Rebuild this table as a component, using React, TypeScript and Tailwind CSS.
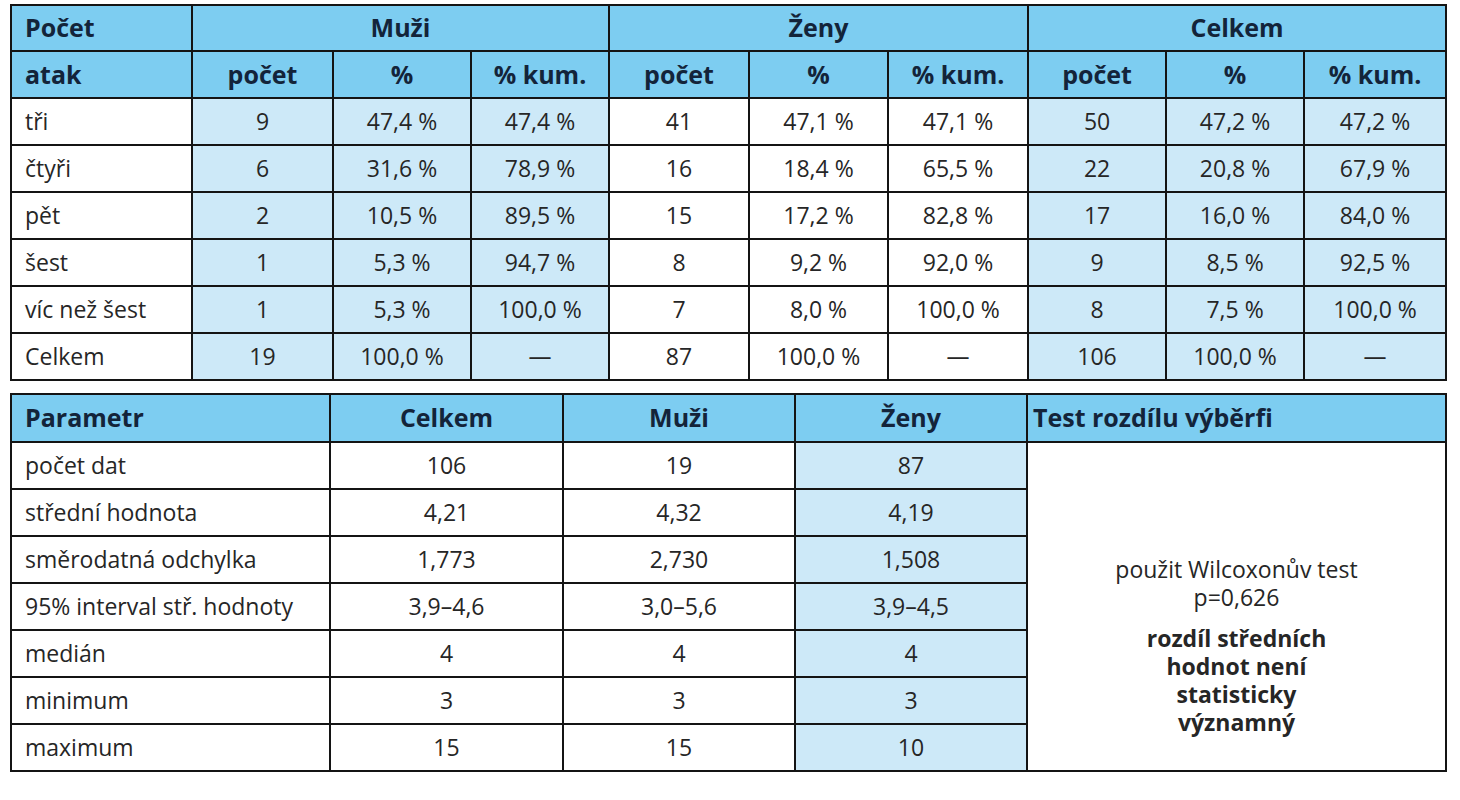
import React from "react";

const head = "bg-[#7dcdf1] text-[#13243a] font-bold text-[25px]";
const light = "bg-[#cde9f8]";
const cell = "border-2 border-[#141414] p-0";

type Row = { label: string; m: string[]; z: string[]; c: string[] };

const rows: Row[] = [
  { label: "tři", m: ["9", "47,4 %", "47,4 %"], z: ["41", "47,1 %", "47,1 %"], c: ["50", "47,2 %", "47,2 %"] },
  { label: "čtyři", m: ["6", "31,6 %", "78,9 %"], z: ["16", "18,4 %", "65,5 %"], c: ["22", "20,8 %", "67,9 %"] },
  { label: "pět", m: ["2", "10,5 %", "89,5 %"], z: ["15", "17,2 %", "82,8 %"], c: ["17", "16,0 %", "84,0 %"] },
  { label: "šest", m: ["1", "5,3 %", "94,7 %"], z: ["8", "9,2 %", "92,0 %"], c: ["9", "8,5 %", "92,5 %"] },
  { label: "víc než šest", m: ["1", "5,3 %", "100,0 %"], z: ["7", "8,0 %", "100,0 %"], c: ["8", "7,5 %", "100,0 %"] },
  { label: "Celkem", m: ["19", "100,0 %", "—"], z: ["87", "100,0 %", "—"], c: ["106", "100,0 %", "—"] },
];

const params = [
  ["počet dat", "106", "19", "87"],
  ["střední hodnota", "4,21", "4,32", "4,19"],
  ["směrodatná odchylka", "1,773", "2,730", "1,508"],
  ["95% interval stř. hodnoty", "3,9–4,6", "3,0–5,6", "3,9–4,5"],
  ["medián", "4", "4", "4"],
  ["minimum", "3", "3", "3"],
  ["maximum", "15", "15", "10"],
];

export default function App() {
  return (
    <div
      className="min-h-screen bg-white pl-[10px] pt-[4px] text-[23px] text-[#262626]"
      style={{ fontFamily: '"Open Sans", "Noto Sans", sans-serif' }}
    >
      {/* první tabulka */}
      <table className="table-fixed border-collapse w-[1435px]">
        <colgroup>
          <col className="w-[181px]" />
          <col className="w-[141px]" />
          <col className="w-[138px]" />
          <col className="w-[138px]" />
          <col className="w-[140px]" />
          <col className="w-[139px]" />
          <col className="w-[140px]" />
          <col className="w-[138px]" />
          <col className="w-[138px]" />
          <col className="w-[142px]" />
        </colgroup>
        <thead>
          <tr className="h-[46px]">
            <th className={`${cell} ${head} text-left pl-[13px]`}>Počet</th>
            <th colSpan={3} className={`${cell} ${head}`}>Muži</th>
            <th colSpan={3} className={`${cell} ${head}`}>Ženy</th>
            <th colSpan={3} className={`${cell} ${head}`}>Celkem</th>
          </tr>
          <tr className="h-[47px]">
            <th className={`${cell} ${head} text-left pl-[13px]`}>atak</th>
            {["počet", "%", "% kum.", "počet", "%", "% kum.", "počet", "%", "% kum."].map((t, i) => (
              <th key={i} className={`${cell} ${head}`}>{t}</th>
            ))}
          </tr>
        </thead>
        <tbody>
          {rows.map((r) => (
            <tr key={r.label} className="h-[47px]">
              <td className={`${cell} pl-[13px]`}>{r.label}</td>
              {r.m.map((v, i) => (
                <td key={"m" + i} className={`${cell} ${light} text-center`}>{v}</td>
              ))}
              {r.z.map((v, i) => (
                <td key={"z" + i} className={`${cell} text-center`}>{v}</td>
              ))}
              {r.c.map((v, i) => (
                <td key={"c" + i} className={`${cell} ${light} text-center`}>{v}</td>
              ))}
            </tr>
          ))}
        </tbody>
      </table>

      {/* druhá tabulka */}
      <table className="mt-[12px] table-fixed border-collapse w-[1435px]">
        <colgroup>
          <col className="w-[319px]" />
          <col className="w-[233px]" />
          <col className="w-[232px]" />
          <col className="w-[232px]" />
          <col className="w-[419px]" />
        </colgroup>
        <thead>
          <tr className="h-[48px]">
            <th className={`${cell} ${head} text-left pl-[13px]`}>Parametr</th>
            <th className={`${cell} ${head}`}>Celkem</th>
            <th className={`${cell} ${head}`}>Muži</th>
            <th className={`${cell} ${head}`}>Ženy</th>
            <th className={`${cell} ${head} text-left pl-[5px]`}>Test rozdílu výběrfi</th>
          </tr>
        </thead>
        <tbody>
          {params.map((p, idx) => (
            <tr key={p[0]} className="h-[47px]">
              <td className={`${cell} pl-[13px]`}>{p[0]}</td>
              <td className={`${cell} text-center`}>{p[1]}</td>
              <td className={`${cell} text-center`}>{p[2]}</td>
              <td className={`${cell} ${light} text-center`}>{p[3]}</td>
              {idx === 0 && (
                <td rowSpan={7} className={`${cell} text-center align-top pt-[112px] leading-[28px]`}>
                  <div>použit Wilcoxonův test</div>
                  <div>p=0,626</div>
                  <div className="mt-[13px] font-bold">
                    <div>rozdíl středních</div>
                    <div>hodnot není</div>
                    <div>statisticky</div>
                    <div>významný</div>
                  </div>
                </td>
              )}
            </tr>
          ))}
        </tbody>
      </table>
    </div>
  );
}
